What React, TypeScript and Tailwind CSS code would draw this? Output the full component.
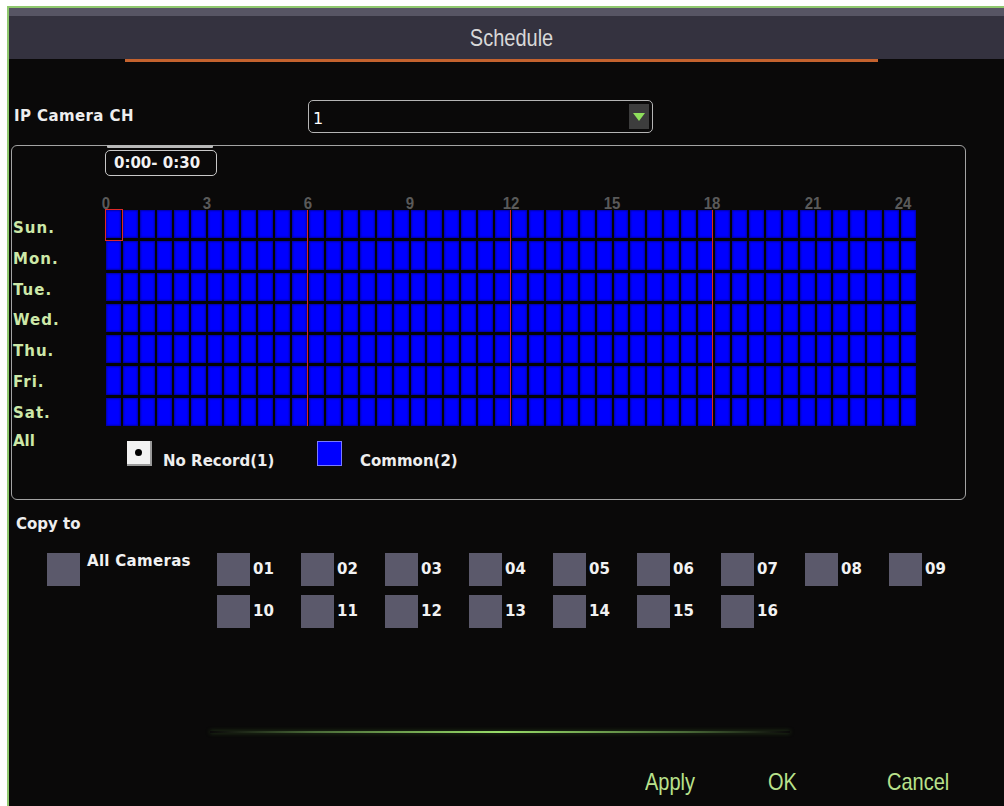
import React from "react";

const DAYS = ["Sun.", "Mon.", "Tue.", "Wed.", "Thu.", "Fri.", "Sat."];
const HOURS: { t: string; x: number }[] = [
  { t: "0", x: 0 },
  { t: "3", x: 101 },
  { t: "6", x: 202 },
  { t: "9", x: 304 },
  { t: "12", x: 405 },
  { t: "15", x: 506 },
  { t: "18", x: 606 },
  { t: "21", x: 707 },
  { t: "24", x: 797 },
];
const ROW1 = ["01", "02", "03", "04", "05", "06", "07", "08", "09"];
const ROW2 = ["10", "11", "12", "13", "14", "15", "16"];

const bold = "font-['DejaVu_Sans',sans-serif] font-bold text-[15px] leading-none";
const narrow = "font-['Liberation_Sans',Arial,sans-serif]";

function Cell() {
  return <div className="bg-[#0000ff] shadow-[inset_0_0_2px_1px_#0000a8]" />;
}

function Check({ label, wide }: { label: string; wide?: boolean }) {
  return (
    <div className={wide ? "flex items-start gap-[7px]" : "flex items-center gap-[3px]"}>
      <div className="w-[33px] h-[33px] bg-[#5b596b] shrink-0" />
      <span className={`${bold} text-[#f2f2f2] ${wide ? "mt-[1px] tracking-[0.3px]" : ""}`}>{label}</span>
    </div>
  );
}

export default function App() {
  return (
    <div className="w-[1004px] h-[806px] bg-white pt-[6px] pl-[7px] overflow-hidden">
      <div className="h-[800px] border-t-2 border-l-2 border-[#8fc86e] bg-[#0a0909] flex flex-col">
        {/* title bar */}
        <div className="h-[51px] flex flex-col">
          <div className="h-[8px] bg-[#575564]" />
          <div className="flex-1 bg-[#34323f] flex items-center justify-center pl-[10px]">
            <span className={`${narrow} inline-block scale-y-[1.18] text-[20px] text-[#d8d8d8] leading-none`}>Schedule</span>
          </div>
        </div>
        <div className="h-[3px] ml-[116px] w-[753px] bg-[#c4622e]" />

        {/* channel selector */}
        <div className="mt-[38px] h-[33px] flex items-center">
          <span className={`${bold} text-[#eeeeee] w-[299px] pl-[5px] tracking-[0.4px]`}>IP Camera CH</span>
          <div className="w-[345px] h-[33px] border border-[#b5b5b5] rounded-[5px] flex items-center justify-between pl-[4px] pr-[3px]">
            <span className="font-['DejaVu_Sans',sans-serif] text-[16px] text-white leading-none pt-[5px]">1</span>
            <div className="w-[20px] h-[25px] bg-[#3d3d3d] flex items-center justify-center">
              <svg width="12" height="8" viewBox="0 0 12 8">
                <path d="M0 0 H12 L6 8 Z" fill="#8fe05c" />
              </svg>
            </div>
          </div>
        </div>

        {/* schedule panel */}
        <div className="mt-[12px] ml-[2px] w-[955px] h-[355px] border border-[#a3a3a3] rounded-[6px] flex flex-col">
          <div className="ml-[93px] flex flex-col">
            <div className="-mt-px ml-[2px] h-[3px] w-[106px] bg-[#b8b8b8] rounded-[1px]" />
            <div className="mt-[2px] w-[112px] h-[26px] border border-[#c8c8c8] rounded-[5px] flex items-center pl-[8px]">
              <span className={`${bold} text-[#f2f2f2]`}>0:00- 0:30</span>
            </div>
          </div>

          <div className="flex">
            {/* day labels */}
            <div className="w-[94px] pt-[34px] pl-[1px] flex flex-col">
              <div className="h-[216px] grid grid-rows-7">
                {DAYS.map((d) => (
                  <div key={d} className="flex items-end pb-[5px]">
                    <span className={`${bold} text-[#cde8a8] tracking-[1px]`}>{d}</span>
                  </div>
                ))}
              </div>
              <span className={`${bold} text-[#cde8a8] mt-[8px]`}>All</span>
            </div>

            {/* time grid */}
            <div className="w-[810px] flex flex-col">
              <div className="h-[34px] relative">
                {HOURS.map((h) => (
                  <span
                    key={h.t}
                    className={`${narrow} absolute bottom-0 -translate-x-1/2 scale-y-[1.15] text-[15px] font-bold leading-none text-[#5a5a5a]`}
                    style={{ left: h.x }}
                  >
                    {h.t}
                  </span>
                ))}
              </div>
              <div className="relative h-[216px] grid grid-cols-[repeat(48,minmax(0,1fr))] grid-rows-7 gap-x-[2px] gap-y-[3px] bg-[#050505]">
                {Array.from({ length: 48 * 7 }, (_, i) => (
                  <Cell key={i} />
                ))}
                <div className="absolute top-0 bottom-0 left-[201px] w-px bg-[#e02424]" />
                <div className="absolute top-0 bottom-0 left-[404px] w-px bg-[#e02424]" />
                <div className="absolute top-0 bottom-0 left-[606px] w-px bg-[#e02424]" />
                <div className="absolute top-[-1px] left-[-1px] w-[18px] h-[32px] border border-[#e02828]" />
              </div>

              {/* legend */}
              <div className="mt-[15px] ml-[21px] flex items-end">
                <div className="w-[190px] flex items-end">
                  <div className="w-[25px] h-[25px] bg-[#f2f2f2] border-r-2 border-b-2 border-[#9a9a9a] flex items-center justify-center">
                    <div className="w-[7px] h-[7px] rounded-full bg-black" />
                  </div>
                  <span className={`${bold} text-[#eeeeee] ml-[11px] mb-[-3px]`}>No Record(1)</span>
                </div>
                <div className="w-[25px] h-[25px] bg-[#0000ff] border border-[#7a7aff]" />
                <span className={`${bold} text-[#eeeeee] ml-[18px] mb-[-3px]`}>Common(2)</span>
              </div>
            </div>
          </div>
        </div>

        {/* copy to */}
        <span className={`${bold} text-[#eeeeee] mt-[17px] pl-[7px]`}>Copy to</span>
        <div className="mt-[21px] pl-[38px] grid grid-cols-[170px_repeat(9,84px)] gap-y-[9px]">
          <Check label="All Cameras" wide />
          {ROW1.map((c) => (
            <Check key={c} label={c} />
          ))}
          <div />
          {ROW2.map((c) => (
            <Check key={c} label={c} />
          ))}
        </div>

        {/* divider glow */}
        <div className="mt-[103px] ml-[201px] w-[580px] h-[2px] bg-[linear-gradient(90deg,transparent,#4a6a38_18%,#98dc68_50%,#4a6a38_82%,transparent)] shadow-[0_0_4px_#2d4a20]" />

        {/* actions */}
        <div className={`${narrow} mt-[39px] pl-[636px] flex text-[20px] leading-none text-[#b9e28c]`}>
          <span className="inline-block scale-y-[1.18]">Apply</span>
          <span className="inline-block scale-y-[1.18] ml-[73px]">OK</span>
          <span className="inline-block scale-y-[1.18] ml-[90px]">Cancel</span>
        </div>
      </div>
    </div>
  );
}
